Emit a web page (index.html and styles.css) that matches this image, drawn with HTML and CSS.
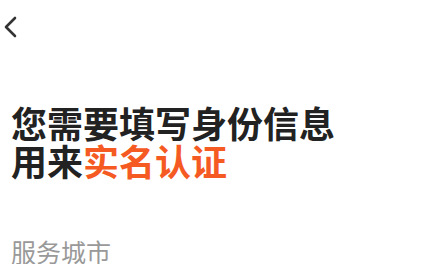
FILE: index.html
```html
<!DOCTYPE html>
<html lang="zh">
<head>
<meta charset="utf-8">
<link rel="stylesheet" href="styles.css">
</head>
<body>
<div class="page">
  <div class="nav">
    <svg class="back" width="14" height="22" viewBox="0 0 14 22"><path d="M12 2 L3 11 L12 20" fill="none" stroke="#333" stroke-width="2.6" stroke-linecap="round" stroke-linejoin="round"/></svg>
  </div>
  <h1 class="title">您需要填写身份信息<br>用来<span class="hl">实名认证</span></h1>
  <div class="label">服务城市</div>
</div>
</body>
</html>
```
FILE: styles.css
```css
html, body { margin: 0; padding: 0; background: #fff; }
body { font-family: "Noto Sans CJK SC", "Noto Sans", sans-serif; overflow: hidden; }
.page { width: 424px; height: 264px; display: flex; flex-direction: column; }
.nav { height: 56px; padding-left: 3px; padding-top: 16px; box-sizing: border-box; }
.back { display: block; }
.title { margin: 54px 0 0 11px; font-size: 36px; line-height: 38px; font-weight: 700; color: #222; letter-spacing: 0; }
.hl { color: #f55a23; }
.label { margin: 60px 0 0 11px; font-size: 25px; line-height: 25px; color: #999; }
```
